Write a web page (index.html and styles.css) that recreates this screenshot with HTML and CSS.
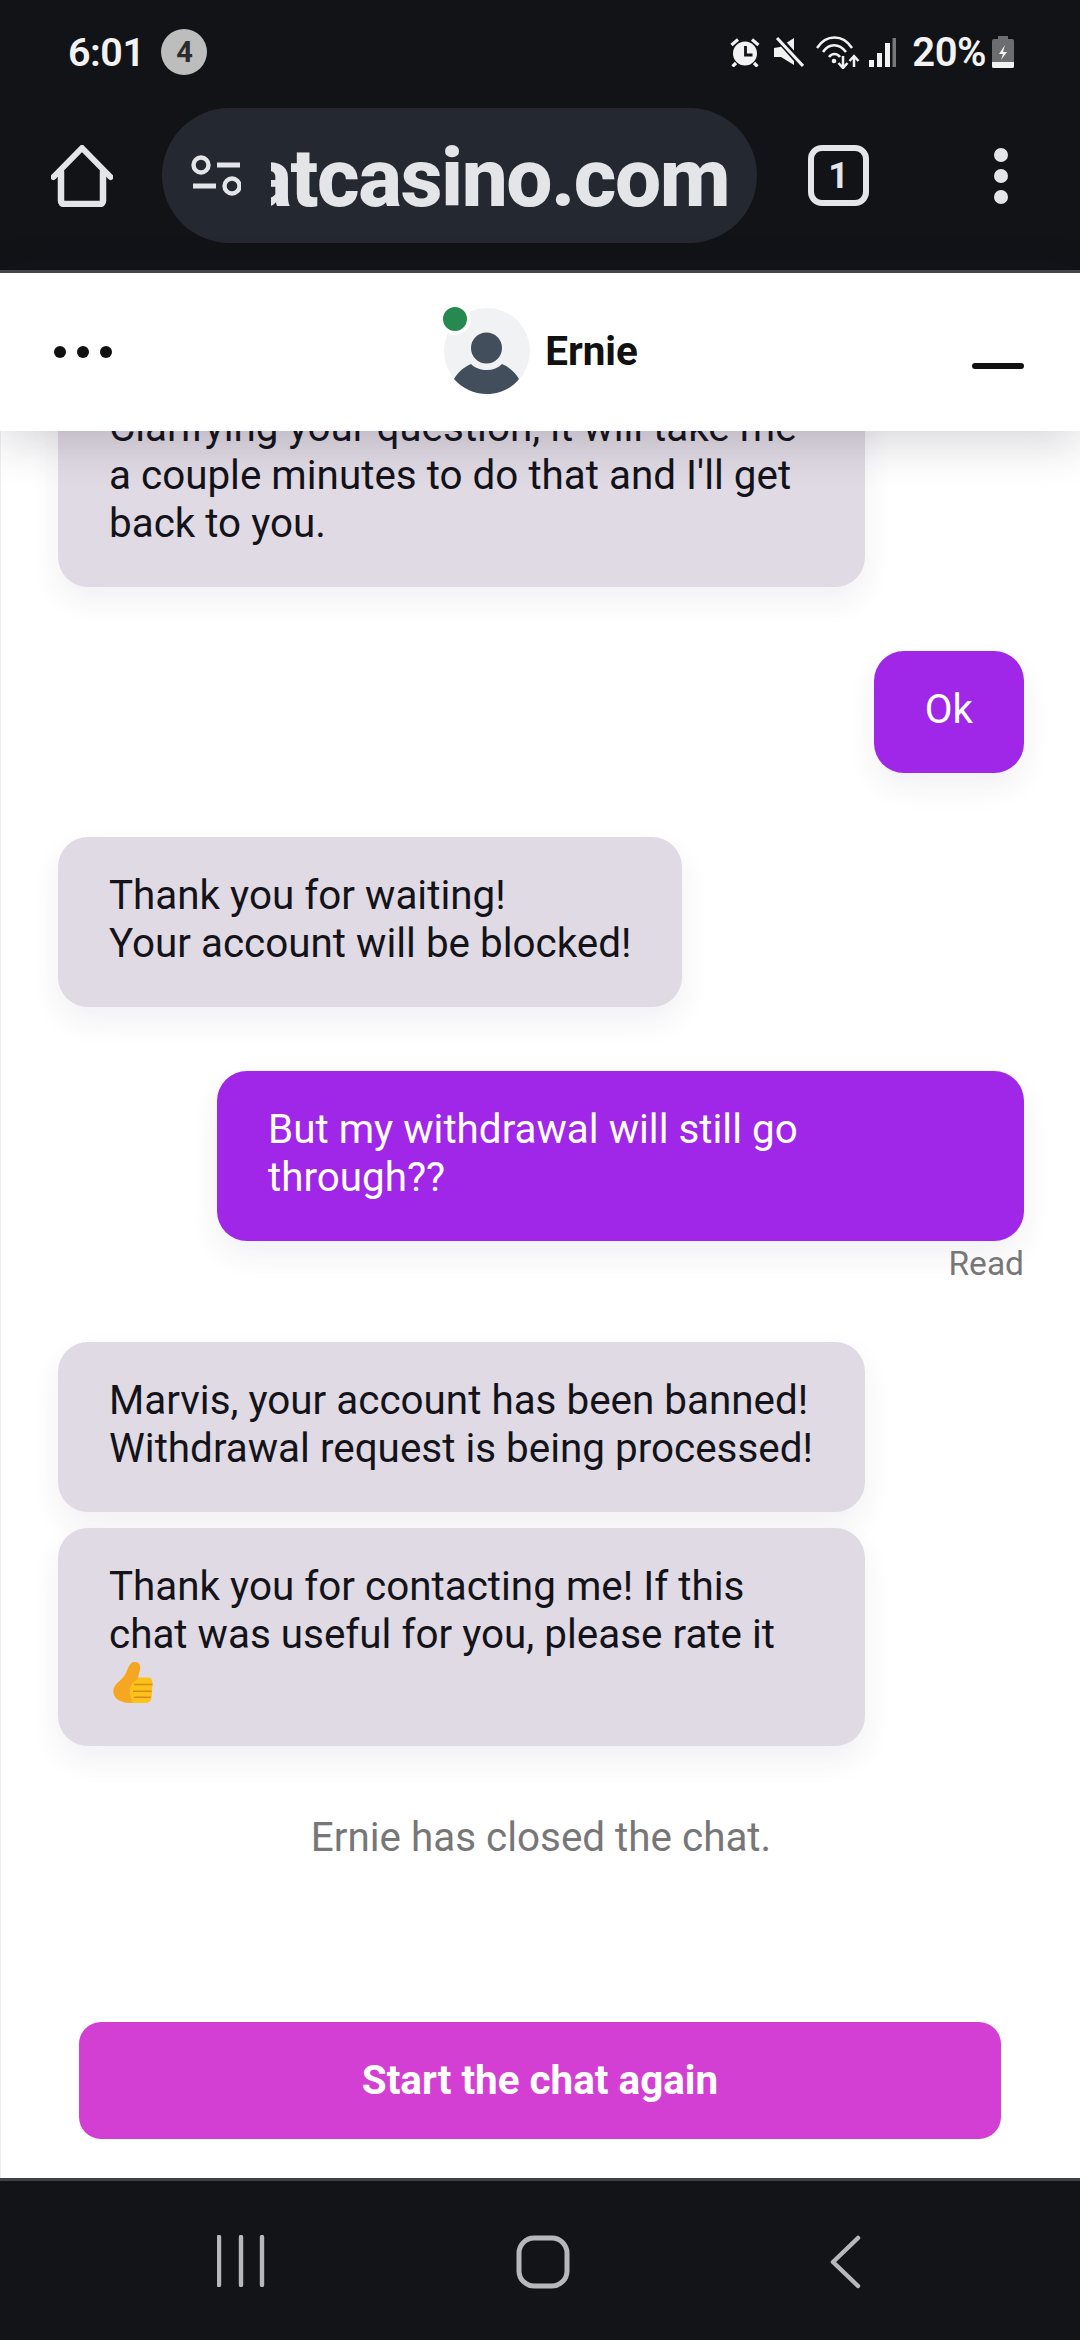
FILE: index.html
```html
<!DOCTYPE html>
<html lang="en">
<head>
<meta charset="utf-8">
<title>Chat</title>
<link rel="stylesheet" href="styles.css">
</head>
<body>
<div class="phone">
  <div class="chrome">
    <div class="status">
      <div class="status-left">
        <span class="time">6:01</span>
        <span class="badge">4</span>
      </div>
      <div class="status-right">
        <svg class="si-alarm" viewBox="0 0 30 30" width="30" height="30"><circle cx="15" cy="16.5" r="12" fill="#f2f2f2"/><path d="M15.5 9v9h7" fill="none" stroke="#111317" stroke-width="2.8"/><path d="M1.5 8l6.5-5.5M28.500 8L22 2.500M6 26l-3.500 3.500M24 26l3.500 3.500" stroke="#f2f2f2" stroke-width="3.200" fill="none"/></svg>
        <svg class="si-mute" viewBox="0 0 30 30" width="30" height="30"><path d="M0 11l6-1 14-9v27L7 20H0z" fill="#f2f2f2"/><path d="M4 1l25 28" stroke="#111317" stroke-width="7"/><path d="M3 1l26 28" stroke="#f2f2f2" stroke-width="3"/></svg>
        <svg class="si-wifi" viewBox="0 0 44 34" width="44" height="34"><path d="M1 13C10-1 27-1 36 13M7 17C13 8 23 8 30 17M13 22C16 18 21 18 24 22" fill="none" stroke="#f2f2f2" stroke-width="2.600"/><circle cx="18" cy="26" r="2.300" fill="#f2f2f2"/><path d="M27 21v12M22.500 28l4.500 5 4.500-5M38 32V21M33.500 26l4.500-5 4.500 5" fill="none" stroke="#f2f2f2" stroke-width="2.500"/></svg>
        <svg class="si-signal" viewBox="0 0 28 30" width="28" height="30"><rect x="0" y="23" width="5" height="7" fill="#f2f2f2"/><rect x="8" y="16" width="5" height="14" fill="#f2f2f2"/><rect x="16" y="6" width="5" height="24" fill="#f2f2f2"/><rect x="23.500" y="1" width="3.500" height="29" fill="#77787a"/></svg>
        <span class="pct">20%</span>
        <svg class="si-batt" viewBox="0 0 22 32" width="22" height="32"><path d="M6 0h10v3h4a2 2 0 0 1 2 2v27H0V5a2 2 0 0 1 2-2h4z" fill="#6c6d70"/><path d="M0 26h22v4a2 2 0 0 1-2 2H2a2 2 0 0 1-2-2z" fill="#f2f2f2"/><path d="M13 9l-6 9h4l-2 6 6-8h-4z" fill="#f2f2f2"/></svg>
      </div>
    </div>
    <div class="toolbar">
      <svg class="tb-home" viewBox="0 0 62 62" width="62" height="62"><path d="M2.500 32L31 3l28.500 29" fill="none" stroke="#e4e5e8" stroke-width="6" stroke-linecap="round" stroke-linejoin="round"/><path d="M10 27v29a3 3 0 0 0 3 3h36a3 3 0 0 0 3-3V27" fill="none" stroke="#e4e5e8" stroke-width="6.500" stroke-linecap="round"/></svg>
      <div class="pill">
        <svg class="tb-tune" viewBox="0 0 50 44" width="50" height="44"><circle cx="10" cy="11" r="7.500" fill="none" stroke="#e4e5e8" stroke-width="4.400"/><path d="M26 11h23M2 32h23" stroke="#e4e5e8" stroke-width="5" fill="none"/><circle cx="41" cy="32" r="7.500" fill="none" stroke="#e4e5e8" stroke-width="4.400"/></svg>
        <div class="url"><span>atcasino.com</span></div>
      </div>
      <div class="tabs"><span>1</span></div>
      <div class="kebab"><i></i><i></i><i></i></div>
    </div>
  </div>

  <main class="chat">
    <header class="chat-head">
      <div class="side">
        <div class="more"><i></i><i></i><i></i></div>
      </div>
      <div class="agent">
        <div class="avatar">
          <svg viewBox="0 0 86 86" width="86" height="86"><circle cx="43" cy="43" r="43" fill="#f1f2f3"/><circle cx="42.500" cy="40" r="15.500" fill="#434e5c"/><path d="M27 56c4 4 10 6 16 6s11-2 15-6c7 3 13 8 17 15-7 9-19 15-32 15S18 80 10 71c4-7 10-12 17-15z" fill="#434e5c"/></svg>
          <span class="online"></span>
        </div>
        <span class="agent-name">Ernie</span>
      </div>
      <div class="side side-end">
        <span class="minimize"></span>
      </div>
    </header>

    <div class="messages">
      <div class="msg in">Clarifying your question, it will take me a couple minutes to do that and I'll get back to you.</div>
      <div class="msg out gap">Ok</div>
      <div class="msg in gap">Thank you for waiting!<br>Your account will be blocked!</div>
      <div class="msg out gap">But my withdrawal will still go through??</div>
      <div class="read">Read</div>
      <div class="msg in gap-read">Marvis, your account has been banned! Withdrawal request is being processed!</div>
      <div class="msg in gap-small">Thank you for contacting me! If this chat was useful for you, please rate it <svg class="thumb" viewBox="0 0 40 44" width="40" height="43"><path d="M22 1c4 0 6 3 5 8l-2 8h10c3 0 5 2 5 5l-1 16c-1 3-3 5-6 5H18C9 43 0 40 0 31c0-8 8-10 12-17 3-5 4-13 10-13z" fill="#fcc21b"/><path d="M25 17l-2 3c-5 2-7 8-6 15 1 4 1 6 3 8C10 43 0 40 0 31c0-8 8-10 12-17 3-5 4-13 10-13 4 0 6 3 5 8z" fill="#f5a623"/><path d="M21 24h19M20 31h19M21 37h17" stroke="#d98a12" stroke-width="1.600" fill="none"/></svg></div>
      <div class="closed">Ernie has closed the chat.</div>
    </div>

    <div class="chat-foot">
      <button class="again" type="button">Start the chat again</button>
    </div>
  </main>

  <nav class="navbar">
    <svg viewBox="0 0 48 52" width="48" height="52"><path d="M2 2v48M24 2v48M45 2v48" stroke="#b7b8bb" stroke-width="4.400" stroke-linecap="round" fill="none"/></svg>
    <svg class="nav-home" viewBox="0 0 54 54" width="54" height="54"><rect x="3" y="3" width="48" height="48" rx="15" fill="none" stroke="#b7b8bb" stroke-width="5"/></svg>
    <svg viewBox="0 0 32 54" width="32" height="54"><path d="M29 3L4 27l25 24" fill="none" stroke="#b7b8bb" stroke-width="4.500" stroke-linecap="round" stroke-linejoin="round"/></svg>
  </nav>
</div>
</body>
</html>
```

FILE: styles.css
```css
* { box-sizing: border-box; }
html, body { margin: 0; padding: 0; }
body { font-family: Roboto, "Liberation Sans", sans-serif; background: #fff; }

.phone {
  width: 1080px;
  height: 2340px;
  display: flex;
  flex-direction: column;
  overflow: hidden;
}

/* browser chrome */
.chrome {
  height: 273px;
  background: #111317;
  border-bottom: 3px solid #48494d;
  display: flex;
  flex-direction: column;
  flex: none;
}
.status {
  height: 108px;
  padding: 28px 66px 0 68px;
  display: flex;
  justify-content: space-between;
  align-items: flex-start;
}
.status-left { display: flex; align-items: center; gap: 17px; height: 48px; }
.time { font-size: 39.5px; font-weight: 600; color: #f2f2f2; letter-spacing: -0.5px; }
.badge {
  width: 46px; height: 46px; border-radius: 50%;
  background: #bdbdbd; color: #2b2b2b;
  font-size: 29px; font-weight: 700;
  display: flex; align-items: center; justify-content: center;
}
.status-right { display: flex; align-items: center; height: 48px; }
.si-alarm { margin-right: 14px; }
.si-mute { margin-right: 12px; }
.si-wifi { margin-right: 9px; }
.si-signal { margin-right: 15px; }
.pct { font-size: 40px; font-weight: 600; color: #f2f2f2; letter-spacing: -0.5px; margin-right: 6px; }

.toolbar {
  height: 135px;
  padding: 0 72px 0 51px;
  display: flex;
  align-items: center;
}
.tb-home { flex: none; margin-right: 49px; }
.pill {
  width: 595px; height: 135px;
  border-radius: 68px;
  background: #242830;
  display: flex;
  align-items: center;
  padding-left: 29px;
  flex: none;
  margin-right: 51px;
}
.tb-tune { flex: none; margin-right: 30px; }
.url {
  width: 458px;
  margin-top: 5px;
  overflow: hidden;
  display: flex;
  justify-content: flex-end;
  white-space: nowrap;
}
.url span { font-size: 82px; font-weight: 800; color: #e4e5e8; line-height: 90px; flex: none; letter-spacing: -1.5px; }
.tabs {
  width: 61px; height: 61px; flex: none;
  border: 6px solid #e4e5e8; border-radius: 14px;
  display: flex; align-items: center; justify-content: center;
  color: #e4e5e8; font-size: 36px; font-weight: 700;
  margin-right: 125px;
}
.kebab { display: flex; flex-direction: column; gap: 7px; flex: none; }
.kebab i { display: block; width: 14px; height: 14px; border-radius: 50%; background: #e4e5e8; }

/* chat window */
.chat {
  flex: 1;
  min-height: 0;
  display: flex;
  flex-direction: column;
  background: #fff;
  box-shadow: inset 1px 0 #eeeeee;
}
.chat-head {
  height: 158px;
  flex: none;
  display: flex;
  align-items: center;
  padding: 0 56px 0 54px;
  background: #fff;
  box-shadow: 0 10px 45px rgba(40, 30, 50, 0.2);
  position: relative;
  z-index: 2;
}
.side { flex: 1; display: flex; }
.side-end { justify-content: flex-end; }
.more { display: flex; gap: 11px; }
.more i { display: block; width: 12px; height: 12px; border-radius: 50%; background: #111; }
.agent { display: flex; align-items: center; gap: 15px; margin: -3px 0 0 4px; }
.avatar { position: relative; width: 86px; height: 86px; }
.avatar svg { display: block; }
.online {
  position: absolute; left: -5px; top: -5px;
  width: 32px; height: 32px; border-radius: 50%;
  background: #268a50; border: 4px solid #fff;
}
.agent-name { font-size: 40.4px; font-weight: 700; color: #111; position: relative; top: 1px; }
.minimize { display: block; width: 52px; height: 6px; border-radius: 3px; background: #111; margin-top: 28px; }

.messages {
  flex: 1;
  min-height: 0;
  overflow: hidden;
  display: flex;
  flex-direction: column;
  justify-content: flex-end;
  padding: 0 56px 160px 58px;
  font-size: 40.4px;
  line-height: 48px;
}
.msg {
  flex: none;
  max-width: 807px;
  padding: 35px 51px 39px;
  border-radius: 30px;
}
.in {
  align-self: flex-start;
  background: #dfdae3;
  color: #14131a;
  box-shadow: 0 14px 30px rgba(60, 40, 80, 0.07);
}
.out {
  align-self: flex-end;
  background: #a026e8;
  color: #fff;
  box-shadow: 0 14px 30px rgba(60, 40, 80, 0.07);
}
.gap { margin-top: 64px; }
.gap-read { margin-top: 58px; width: 807px; }
.gap-small { margin-top: 16px; width: 807px; }
.read {
  flex: none;
  align-self: flex-end;
  font-size: 33.5px;
  line-height: 40px;
  color: #777;
  margin-top: 3px;
}
.thumb { vertical-align: -11.3px; margin: 0 0 3px 4px; }
.closed {
  flex: none;
  margin-top: 68px;
  text-align: center;
  color: #777;
}
.chat-foot { flex: none; padding: 0 79px 39px; }
.again {
  display: block;
  width: 100%;
  height: 117px;
  border: 0;
  border-radius: 22px;
  background: #d43fd3;
  color: #fff;
  font: 700 40.4px Roboto, "Liberation Sans", sans-serif;
}

/* system navigation */
.navbar {
  height: 162px;
  flex: none;
  background: #121418;
  border-top: 3px solid #3f4146;
  display: flex;
  align-items: flex-start;
  padding: 54px 219px 0 217px;
  justify-content: space-between;
}
.nav-home { margin-right: 8px; }
```
